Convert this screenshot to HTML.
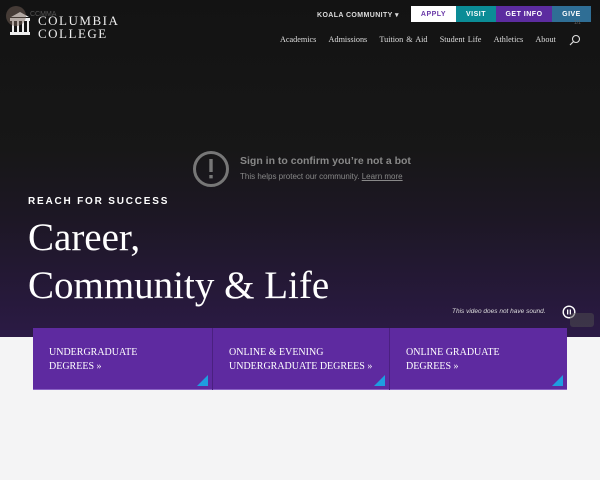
<!DOCTYPE html>
<html><head><style>
*{margin:0;padding:0;box-sizing:border-box}
body{width:600px;height:480px;overflow:hidden;background:#f4f4f5;font-family:"Liberation Sans",sans-serif;position:relative}
.hero{position:absolute;left:0;top:0;width:600px;height:337px;background:linear-gradient(#131313 0px,#171717 150px,#1d1725 220px,#2b1a45 337px)}
.t{position:absolute;white-space:nowrap}
.serif{font-family:"Liberation Serif",serif}
.btn{position:absolute;top:6px;height:16px;font-size:7px;font-weight:bold;letter-spacing:.5px;text-align:center;line-height:17px;color:#fff}
.card{position:absolute;top:328px;height:62px;background:#5e2aa0;color:#fff;font-family:"Liberation Serif",serif;font-size:10px;line-height:14px;padding:18px 0 0 16px;border-bottom:1px solid #8a63c4}
.tri{position:absolute;right:4px;bottom:3px;width:0;height:0;border-left:11px solid transparent;border-bottom:11px solid #1e9de0}
</style></head><body>
<div class="hero"></div>
<svg class="t" style="left:8px;top:10px" width="24" height="28" viewBox="0 0 24 28"><path d="M3 7 L12 2 L21 7 Z" fill="#eee"/><rect x="2" y="8" width="20" height="3" fill="#eee"/><rect x="4" y="11" width="2" height="11" fill="#eee"/><rect x="9" y="11" width="2" height="11" fill="#eee"/><rect x="14" y="11" width="2" height="11" fill="#eee"/><rect x="19" y="11" width="2" height="11" fill="#eee"/><rect x="2" y="22" width="20" height="3" fill="#eee"/></svg>
<div class="t" style="left:6px;top:6px;width:20px;height:20px;border-radius:50%;background:rgba(120,100,90,.5)"></div>
<div class="t" style="left:30px;top:11px;font-size:7px;color:#555">CCMMA</div>
<div class="t serif" style="left:38px;top:14px;font-size:13px;letter-spacing:1.5px;color:#eee;line-height:13px">COLUMBIA<br>COLLEGE</div>
<div class="t" style="left:317px;top:11px;font-size:7px;font-weight:bold;letter-spacing:.4px;color:#ddd">KOALA COMMUNITY ▾</div>
<div class="btn" style="left:411px;width:45px;background:#fff;color:#6a3aa8">APPLY</div>
<div class="btn" style="left:456px;width:40px;background:#0b8c96">VISIT</div>
<div class="btn" style="left:496px;width:56px;background:#5c2ca0">GET INFO</div>
<div class="btn" style="left:552px;width:39px;background:#2f6e95">GIVE</div>
<div class="t" style="left:574px;top:20px;font-size:5px;color:#666">1/1</div>
<div class="t serif" style="left:280px;top:35px;font-size:8.2px;color:#ddd;word-spacing:1px">Academics&nbsp;&nbsp;&nbsp;&nbsp;Admissions&nbsp;&nbsp;&nbsp;&nbsp;Tuition &amp; Aid&nbsp;&nbsp;&nbsp;&nbsp;Student Life&nbsp;&nbsp;&nbsp;&nbsp;Athletics&nbsp;&nbsp;&nbsp;&nbsp;About</div>
<svg class="t" style="left:569px;top:34px" width="12" height="12" viewBox="0 0 12 12"><circle cx="7" cy="5" r="3.5" fill="none" stroke="#ddd" stroke-width="1.1"/><path d="M4.5 7.5 L1 11" stroke="#ddd" stroke-width="1.2"/></svg>
<svg class="t" style="left:192px;top:150px" width="38" height="38" viewBox="0 0 38 38"><circle cx="19" cy="19" r="16.5" fill="none" stroke="#777" stroke-width="3"/><rect x="17.3" y="9" width="3.4" height="13" fill="#777"/><rect x="17.3" y="25" width="3.4" height="3.4" fill="#777"/></svg>
<div class="t" style="left:240px;top:155px;font-size:10.5px;font-weight:bold;color:#888">Sign in to confirm you’re not a bot</div>
<div class="t" style="left:240px;top:172px;font-size:8px;color:#888">This helps protect our community. <u>Learn more</u></div>
<div class="t" style="left:28px;top:196px;font-size:10px;font-weight:bold;letter-spacing:1.8px;color:#fff">REACH FOR SUCCESS</div>
<div class="t serif" style="left:28px;top:214px;font-size:39px;line-height:48px;color:#fff">Career,<br>Community &amp; Life</div>
<div class="t" style="left:452px;top:308px;font-size:6.5px;font-style:italic;color:#ddd">This video does not have sound.</div>
<svg class="t" style="left:562px;top:305px" width="14" height="14" viewBox="0 0 14 14"><circle cx="7" cy="7" r="5.8" fill="none" stroke="#fff" stroke-width="1.4"/><rect x="5" y="4.5" width="1.3" height="5" fill="#fff"/><rect x="7.7" y="4.5" width="1.3" height="5" fill="#fff"/></svg>
<div class="t" style="left:570px;top:313px;width:24px;height:14px;background:rgba(80,80,80,.5);border-radius:3px"></div>
<div class="t" style="left:33px;top:328px;width:534px;height:62px;background:#4a2080"></div>
<div class="card" style="left:33px;width:179px">UNDERGRADUATE<br>DEGREES »<div class="tri"></div></div>
<div class="card" style="left:213px;width:176px">ONLINE &amp; EVENING<br>UNDERGRADUATE DEGREES »<div class="tri"></div></div>
<div class="card" style="left:390px;width:177px">ONLINE GRADUATE<br>DEGREES »<div class="tri"></div></div>
</body></html>
